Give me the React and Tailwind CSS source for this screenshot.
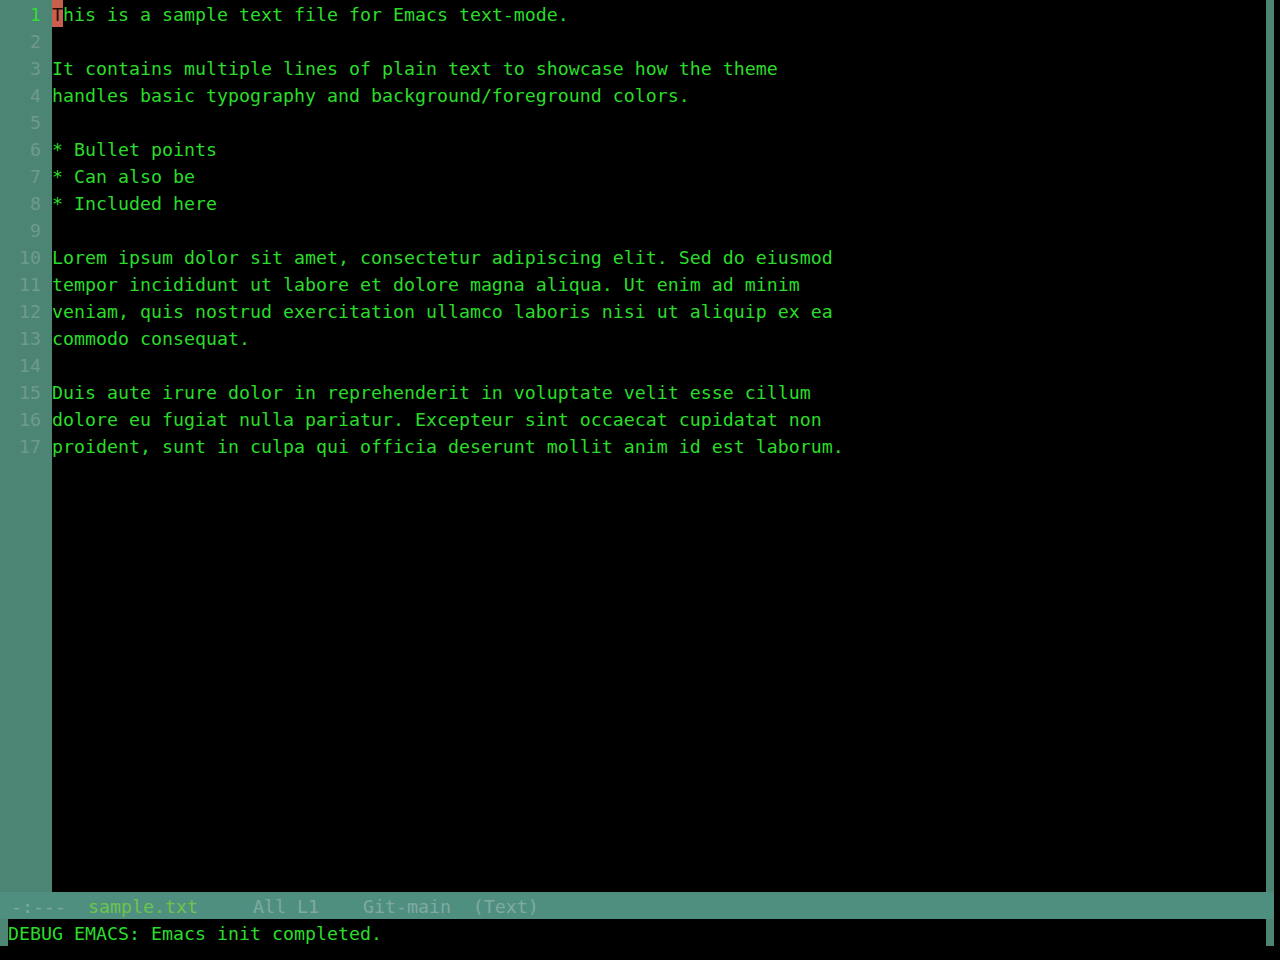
const lines = [
  "This is a sample text file for Emacs text-mode.",
  "",
  "It contains multiple lines of plain text to showcase how the theme",
  "handles basic typography and background/foreground colors.",
  "",
  "* Bullet points",
  "* Can also be",
  "* Included here",
  "",
  "Lorem ipsum dolor sit amet, consectetur adipiscing elit. Sed do eiusmod",
  "tempor incididunt ut labore et dolore magna aliqua. Ut enim ad minim",
  "veniam, quis nostrud exercitation ullamco laboris nisi ut aliquip ex ea",
  "commodo consequat.",
  "",
  "Duis aute irure dolor in reprehenderit in voluptate velit esse cillum",
  "dolore eu fugiat nulla pariatur. Excepteur sint occaecat cupidatat non",
  "proident, sunt in culpa qui officia deserunt mollit anim id est laborum.",
];

const App = () => {
  return (
    <div className="flex h-[960px] w-[1280px] flex-col overflow-hidden bg-black font-['DejaVu_Sans_Mono',monospace] text-[18.27px] leading-[25px]">
      {/* editor window */}
      <div className="flex h-[892px] w-[1274px]">
        <div className="w-[52px] bg-[#4d8575] pl-2 pr-[11px] text-right">
          {lines.map((_, i) => (
            <div key={i} className={"h-[27px] pt-[2px] " + (i === 0 ? "text-[#33dd33]" : "text-[#6f9a8d]")}>
              {i + 1}
            </div>
          ))}
        </div>
        <div className="flex-1 whitespace-pre text-[#2bdc2b]">
          {lines.map((l, i) =>
            i === 0 ? (
              <div key={i} className="flex h-[27px]">
                <span className="h-[27px] w-[11px] bg-[#c9604e] pt-[2px] text-[#2a0c06]">T</span>
                <span className="pt-[2px]">{l.slice(1)}</span>
              </div>
            ) : (
              <div key={i} className="h-[27px] pt-[2px]">
                {l}
              </div>
            )
          )}
        </div>
        <div className="w-2 bg-[#4d8575]" />
      </div>

      {/* mode line */}
      <div className="h-[27px] w-[1274px] whitespace-pre bg-[#4f8f80] pt-[2px] text-[#80aaa0]">
        {" -:---  "}
        <span className="text-[#6cc44c]">sample.txt</span>
        {"     All L1    Git-main  (Text)"}
      </div>

      {/* minibuffer */}
      <div className="flex h-[27px] w-[1274px]">
        <div className="w-2 bg-[#4d8575]" />
        <div className="flex-1 whitespace-pre pt-[2px] text-[#2bdc2b]">DEBUG EMACS: Emacs init completed.</div>
        <div className="w-2 bg-[#4d8575]" />
      </div>
    </div>
  );
};

export default App;
